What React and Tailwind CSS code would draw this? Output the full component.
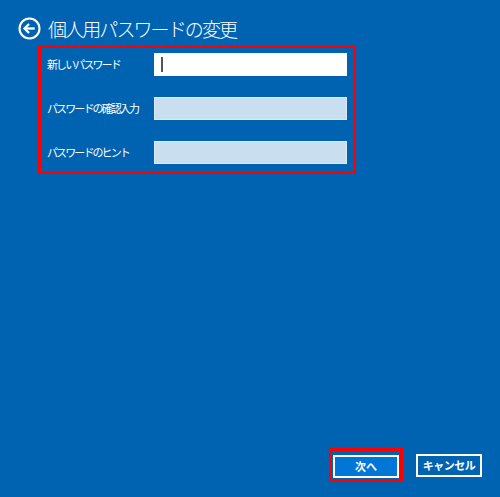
import React from 'react';

const fields = [
  { label: '新しいパスワード', active: true },
  { label: 'パスワードの確認入力', active: false },
  { label: 'パスワードのヒント', active: false },
];

function BackIcon() {
  return (
    <svg width="23" height="23" viewBox="0 0 24 24" fill="none" stroke="white" strokeWidth="2.2">
      <circle cx="12" cy="12" r="10.4" />
      <path d="M17.5 12H7" strokeWidth="2.4" />
      <path d="M11.5 7.3L6.8 12l4.7 4.7" strokeWidth="2.4" strokeLinejoin="miter" />
    </svg>
  );
}

export default function App() {
  const font = { fontFamily: '"Noto Sans CJK JP", "Noto Sans", sans-serif' };

  return (
    <div className="w-[500px] h-[497px] bg-[#0063B1] flex flex-col text-white" style={font}>
      {/* header */}
      <div className="flex items-center h-[23px] mt-[17px] pl-[18px] gap-[7px]">
        <BackIcon />
        <h1 className="text-[19px] leading-none font-light tracking-[-1.9px]">個人用パスワードの変更</h1>
      </div>

      {/* highlighted form */}
      <div className="ml-[38px] mt-[5px] w-[318px] border-[3px] border-[#ff0000] pt-[5px] pb-[7px] pl-[6px] pr-[6px] flex flex-col gap-[21px]">
        {fields.map((f) => (
          <div key={f.label} className="flex items-center h-[23px]">
            <span className="w-[107px] text-[11px] tracking-[-1.9px] leading-none">{f.label}</span>
            {f.active ? (
              <div className="w-[193px] h-[23px] bg-white flex items-center">
                <span className="ml-[7px] w-[2px] h-[15px] bg-[#555]"></span>
              </div>
            ) : (
              <div className="w-[193px] h-[23px] bg-[#C9DEEF] border border-[#DCEAF5]"></div>
            )}
          </div>
        ))}
      </div>

      {/* footer buttons */}
      <div className="mt-auto flex justify-end items-center gap-[13px] pr-[18px] pb-[15px]">
        <div className="border-[3px] border-[#ff0000] p-px">
          <button className="w-[66px] h-[23px] bg-[#0077D6] border-2 border-white text-[11px] font-bold leading-none text-white">
            次へ
          </button>
        </div>
        <button className="w-[66px] h-[23px] border-2 border-white text-[11px] font-bold leading-none text-white tracking-[-0.5px]">
          キャンセル
        </button>
      </div>
    </div>
  );
}
